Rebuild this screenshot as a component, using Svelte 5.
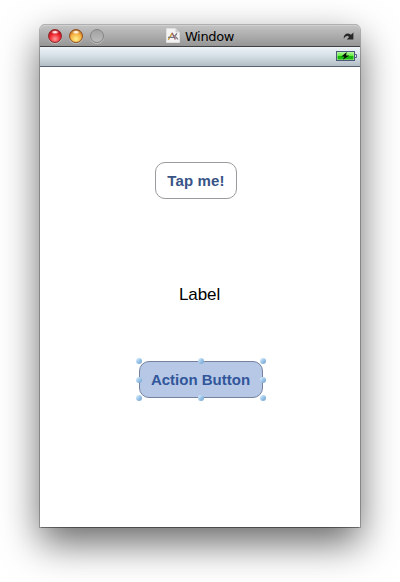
<script>
  const handles = [[0, 0], [50, 0], [100, 0], [0, 50], [100, 50], [0, 100], [50, 100], [100, 100]];
</script>

<main class="desktop">
  <section class="window">
    <header class="titlebar">
      <div class="lights">
        <i class="light red"></i>
        <i class="light amber"></i>
        <i class="light off"></i>
      </div>
      <div class="title">
        <svg width="14" height="16" viewBox="0 0 14 16">
          <path d="M.5 .5H9.5L13.5 4.5V14.5H.5Z" fill="#f3f3f3" stroke="#dedede" />
          <path d="M9.5 .5V4.5H13.5Z" fill="#cdcdcd" />
          <path d="M2.3 11.8L6.2 5" stroke="#cf9f43" stroke-width="1.5" />
          <path d="M6 4.8L9.4 11.5" stroke="#965d6c" stroke-width="1.4" />
          <path d="M2 9.3H8M8.3 7.5L12 11.3M8.8 8L11 5.5" stroke="#777780" stroke-width="1.2" />
        </svg>
        <span>Window</span>
      </div>
      <svg class="rotate" width="11" height="8" viewBox="0 0 11 8">
        <path d="M.9 6.8C-.2 3 4.1-.6 8 2.7L10.4 .6V7.4H3.8L6.1 5C4.7 3.1 2.2 3.7 .9 6.8Z" fill="#292929" />
      </svg>
    </header>
    <div class="status">
      <svg width="22" height="11" viewBox="0 0 22 11">
        <defs>
          <linearGradient id="charge" x1="0" y1="0" x2="0" y2="1">
            <stop offset="0" stop-color="#a4f58c" />
            <stop offset=".45" stop-color="#66ee42" />
            <stop offset=".5" stop-color="#14bb06" />
            <stop offset="1" stop-color="#1fb812" />
          </linearGradient>
        </defs>
        <rect x=".5" y=".5" width="18" height="9" fill="#b8ecab" stroke="#4b5878" />
        <rect x="1.5" y="1.5" width="16" height="7" fill="url(#charge)" />
        <path d="M19 3.5H20.5V6.5H19" fill="#d9e4e9" stroke="#53617e" />
        <path d="M10.8 .9L5.4 5.5H8.6L6.8 8.8L13.3 4.4H10Z" fill="#050b05" />
      </svg>
    </div>
    <div class="canvas">
      <button class="tap">Tap me!</button>
      <span class="label">Label</span>
      <div class="selection">
        <button class="action">Action Button</button>
        {#each handles as [x, y]}
          <i class="handle" style="left:{x}%;top:{y}%"></i>
        {/each}
      </div>
    </div>
  </section>
</main>

<style>
  :global(body) { background: #fff; overflow: hidden; }
  .desktop {
    box-sizing: border-box;
    width: 400px;
    height: 582px;
    padding: 24px 40px 0;
    overflow: hidden;
    font-family: "Liberation Sans", Arial, sans-serif;
  }
  .window {
    display: flex;
    flex-direction: column;
    width: 320px;
    height: 503px;
    border-radius: 5px 5px 0 0;
    background: #fff;
    box-shadow: 1px 1px rgba(0, 0, 0, .25), -1px 1px rgba(0, 0, 0, .25), 0 16px 38px rgba(0, 0, 0, .6);
  }
  .titlebar {
    box-sizing: border-box;
    position: relative;
    display: flex;
    align-items: center;
    justify-content: center;
    height: 23px;
    border-bottom: 1px solid #414141;
    border-radius: 5px 5px 0 0;
    background: linear-gradient(#c6c6c6, #969696);
    box-shadow: inset 0 1px #b0b0b0, inset 0 2px #d0d0d0;
  }
  .lights { position: absolute; left: 8px; top: 5px; display: flex; gap: 7px; }
  .light {
    box-sizing: border-box;
    width: 14px;
    height: 14px;
    border-radius: 50%;
    box-shadow: 0 1px rgba(255, 255, 255, .35);
  }
  .red {
    border: 1px solid #8c2b2c;
    background: radial-gradient(ellipse 4px 2px at 50% 18%, #ffe5e5 30%, transparent), radial-gradient(circle at 50% 75%, #ff9b9b, #f0272f 48%, #9c0c13 90%);
  }
  .amber {
    border: 1px solid #8f5220;
    background: radial-gradient(ellipse 4px 2px at 50% 18%, #fff2df 30%, transparent), radial-gradient(circle at 50% 75%, #fff08c, #f5ae3e 52%, #a34f10 92%);
  }
  .off { border: 1px solid #858585; background: linear-gradient(#a2a2a2, #bcbcbc); }
  .title {
    display: flex;
    align-items: center;
    gap: 5px;
    color: #000;
    font: 13px/16px "DejaVu Sans", sans-serif;
    letter-spacing: -.35px;
    padding-top: 1px;
  }
  .title span { padding-top: 2px; }
  .rotate { position: absolute; left: 303px; top: 8px; }
  .status {
    box-sizing: border-box;
    display: flex;
    justify-content: flex-end;
    height: 20px;
    padding: 4px 2px 0;
    border-bottom: 1px solid #586570;
    background: linear-gradient(#edf4f9, #d3dee4 50%, #b3bfc5);
  }
  .canvas { display: flex; flex-direction: column; align-items: flex-start; flex: 1; padding: 95px 0 0 99px; }
  button {
    box-sizing: border-box;
    display: block;
    height: 37px;
    margin: 0;
    padding: 1px 0 0;
    border: 1px solid #9b9b9f;
    border-radius: 10px;
    background: #fff;
    color: #385487;
    font: bold 15px/18px "Liberation Sans", Arial, sans-serif;
    white-space: nowrap;
  }
  .tap { width: 82px; margin-left: 16px; letter-spacing: .15px; }
  .label { margin: 86px 0 0 40px; color: #000; font-size: 17px; line-height: 20px; letter-spacing: -.1px; }
  .selection { position: relative; margin-top: 56px; }
  .action { width: 124px; padding-right: 1px; border-color: #74829f; background: #b7c8e7; color: #315699; }
  .handle {
    position: absolute;
    width: 6px;
    height: 6px;
    margin: -3px 0 0 -3px;
    border-radius: 50%;
    background: linear-gradient(135deg, #d9edfb 10%, #9bc5e9 50%, #739fca);
  }
</style>
